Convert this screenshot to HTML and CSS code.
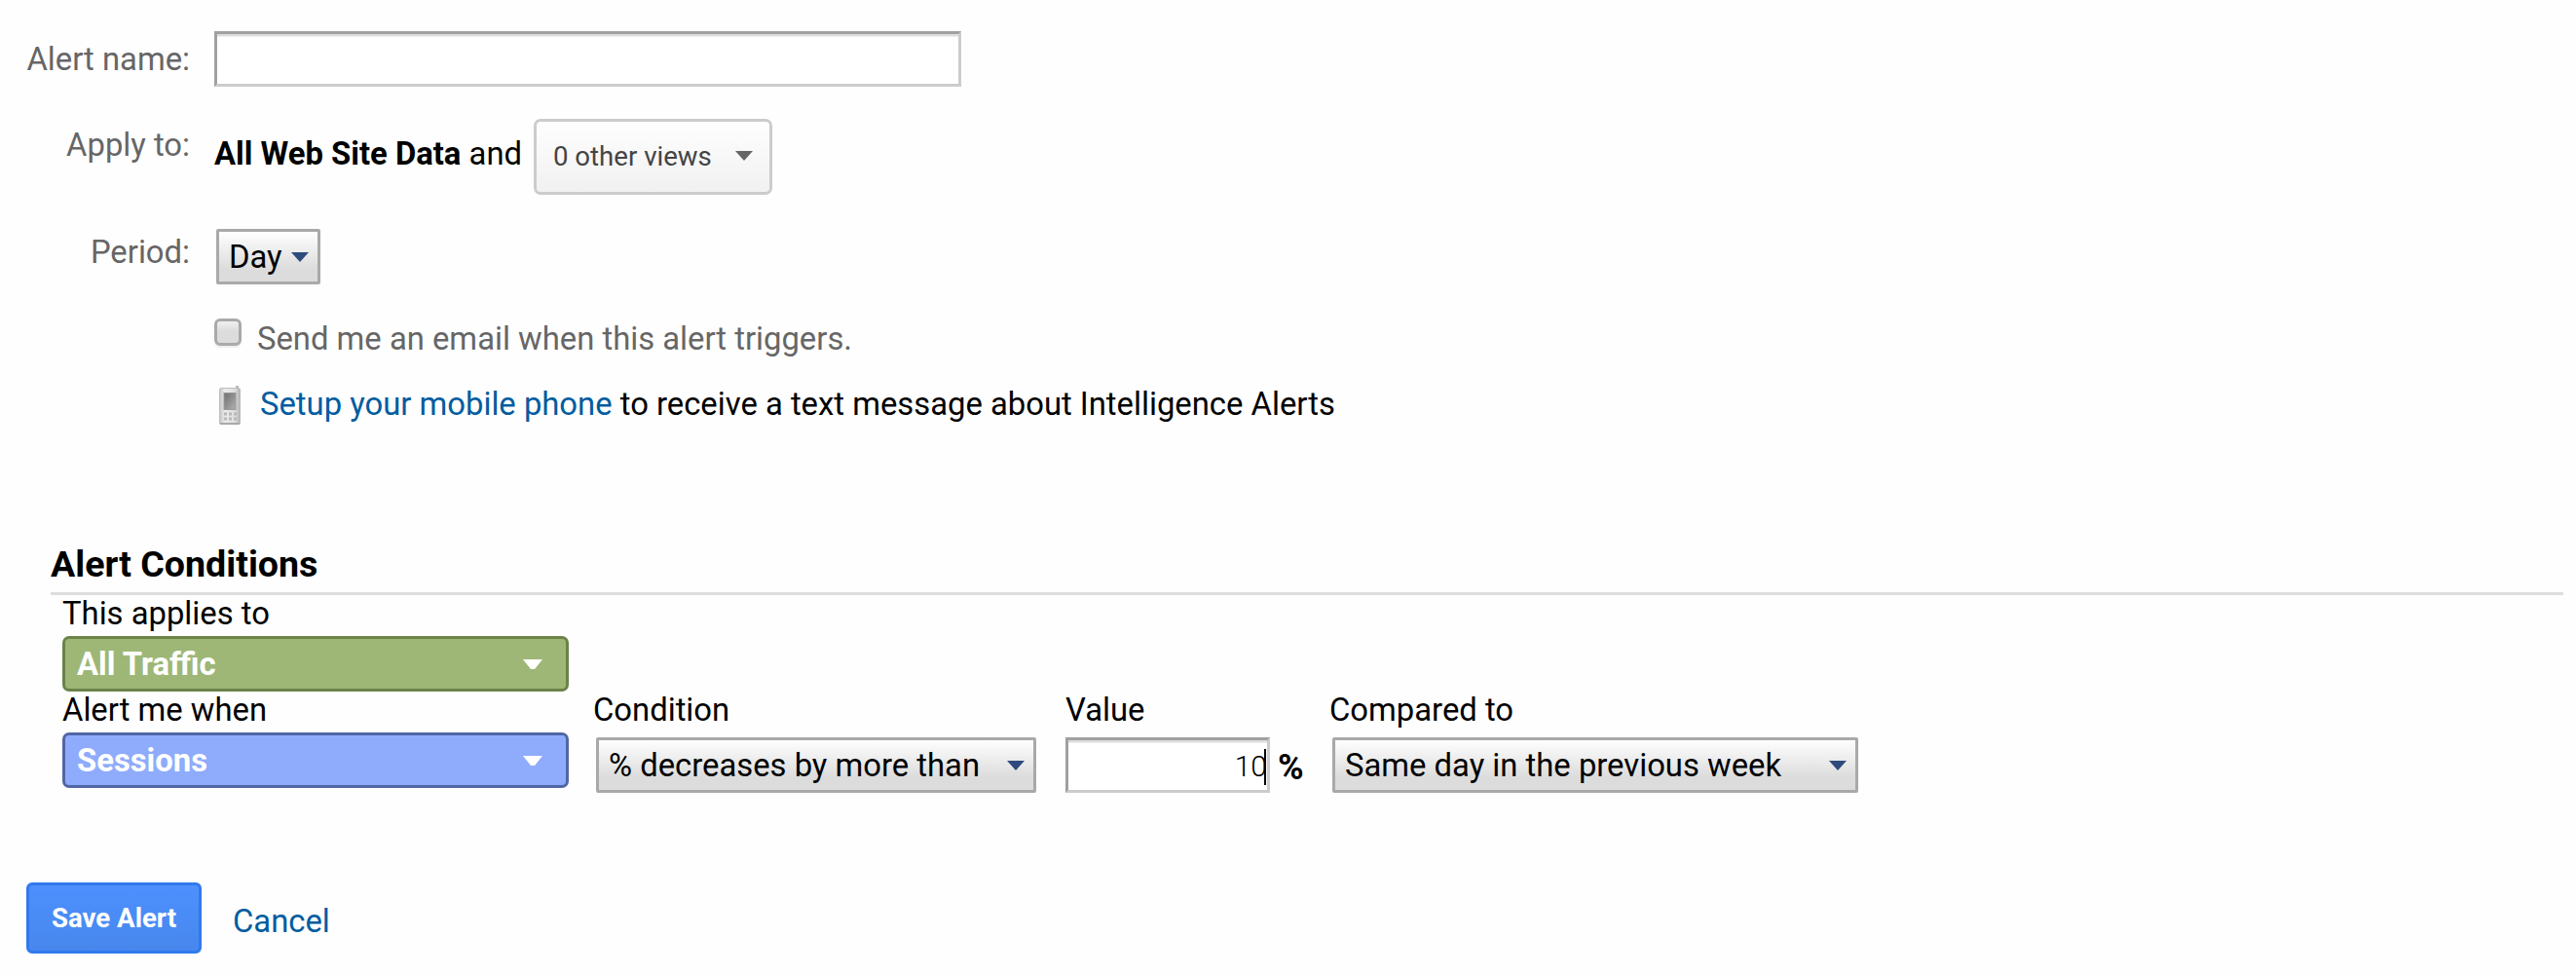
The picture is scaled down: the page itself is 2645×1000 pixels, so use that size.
FILE: index.html
```html
<!DOCTYPE html>
<html lang="en">

<head>
    <meta charset="utf-8">
    <meta name="viewport" content="width=device-width, initial-scale=1.0">
    <title>New alert</title>
    <link rel="stylesheet" href="styles.css">
</head>

<body>

    <form class="alert-form">
        <div class="row">
            <label class="label" for="name">Alert name:</label>
            <input class="text-input name-input" id="name" type="text">
        </div>

        <div class="row row-apply">
            <span class="label">Apply to:</span>
            <span class="profile"><strong>All Web Site Data</strong> and</span>
            <button class="views" type="button">
                <span>0 other views</span>
                <svg class="arrow" viewBox="0 0 18 10"><path d="M0 0h18L9 10z" fill="#666"/></svg>
            </button>
        </div>

        <div class="row row-period">
            <span class="label">Period:</span>
            <button class="select select-day" type="button">
                <span>Day</span>
                <svg class="arrow" viewBox="0 0 18 10"><path d="M0 0h18L9 10z" fill="#2f4a7d"/></svg>
            </button>
        </div>

        <div class="row row-email">
            <span class="checkbox"></span>
            <span class="email-text">Send me an email when this alert triggers.</span>
        </div>

        <div class="row row-phone">
            <svg class="phone" viewBox="0 0 22 40">
                <defs>
                    <linearGradient id="body" x1="0" x2="1" y1="0" y2="0">
                        <stop offset="0" stop-color="#c4c4c4"/>
                        <stop offset=".25" stop-color="#ebebeb"/>
                        <stop offset=".75" stop-color="#dedede"/>
                        <stop offset="1" stop-color="#b0b0b0"/>
                    </linearGradient>
                    <linearGradient id="screen" x1="0" x2="1" y1="0" y2="1">
                        <stop offset="0" stop-color="#707070"/>
                        <stop offset="1" stop-color="#b0b0b0"/>
                    </linearGradient>
                </defs>
                <path d="M17 0h3v5h-3z" fill="#bbb"/>
                <rect x=".5" y="2.5" width="21" height="37" rx="1.5" fill="url(#body)" stroke="#bdbdbd"/>
                <path d="M1 39h20" stroke="#aaa" stroke-width="2"/>
                <rect x="5" y="7.5" width="12" height="17" fill="url(#screen)" stroke="#999"/>
                <path d="M5 29h3m2 0h3m2 0h3M5 34h3m2 0h3m2 0h3" stroke="#b8b8b8" stroke-width="3"/>
            </svg>
            <span class="phone-text"><a href="#">Setup your mobile phone</a> to receive a text message about Intelligence Alerts</span>
        </div>

        <h2>Alert Conditions</h2>

        <div class="conditions">
            <div class="field">
                <span class="field-label">This applies to</span>
                <button class="picker picker-green" type="button">
                    <span>All Traffic</span>
                    <svg class="arrow" viewBox="0 0 20 10"><path d="M0 0h20l-8 10h-4z" fill="#fff"/></svg>
                </button>
            </div>

            <div class="field-row">
                <div class="field">
                    <span class="field-label">Alert me when</span>
                    <button class="picker picker-blue" type="button">
                        <span>Sessions</span>
                        <svg class="arrow" viewBox="0 0 20 10"><path d="M0 0h20l-8 10h-4z" fill="#fff"/></svg>
                    </button>
                </div>
                <div class="field field-condition">
                    <span class="field-label">Condition</span>
                    <button class="select select-condition" type="button">
                        <span>% decreases by more than</span>
                        <svg class="arrow" viewBox="0 0 18 10"><path d="M0 0h18L9 10z" fill="#2f4a7d"/></svg>
                    </button>
                </div>
                <div class="field field-value">
                    <span class="field-label">Value</span>
                    <div class="value">
                        <div class="text-input value-input">10<span class="cursor"></span></div>
                        <strong>%</strong>
                    </div>
                </div>
                <div class="field">
                    <span class="field-label">Compared to</span>
                    <button class="select select-compare" type="button">
                        <span>Same day in the previous week</span>
                        <svg class="arrow" viewBox="0 0 18 10"><path d="M0 0h18L9 10z" fill="#2f4a7d"/></svg>
                    </button>
                </div>
            </div>
        </div>

        <div class="actions">
            <button class="save" type="button">Save Alert</button>
            <a href="#">Cancel</a>
        </div>
    </form>

</body>

</html>
```

FILE: styles.css
```css
* {
    box-sizing: border-box;
}

body {
    margin: 0;
    background-color: #fefefe;
    font-family: Roboto, sans-serif;
    font-size: 32.8px;
    line-height: 38px;
    color: #000;
}

button {
    font-family: inherit;
    font-size: inherit;
    line-height: inherit;
    display: flex;
    justify-content: space-between;
    padding: 0;
}

a {
    color: #015c9f;
    text-decoration: none;
}

.alert-form {
    padding: 32px 13px 0 0;
}

.row {
    display: flex;
    align-items: flex-start;
    height: 57px;
    white-space: nowrap;
}

.label {
    width: 195px;
    margin-right: 25px;
    padding-top: 10px;
    text-align: right;
    color: #666;
}

.text-input {
    height: 57px;
    border: 3px solid;
    border-color: #a0a0a0 #ccc #ccc #a0a0a0;
    background-color: #fff;
    box-shadow: inset 0 2px #ddd, inset 0 3px #eee;
}

.name-input {
    width: 767px;
}

.arrow {
    width: 18px;
    height: 10px;
    flex: none;
}

/* apply to */

.row-apply {
    height: 78px;
    margin-top: 33px;
}

.row-apply .label {
    padding-top: 8px;
}

.profile {
    width: 328px;
    padding-top: 17px;
}

.views {
    width: 245px;
    height: 78px;
    padding: 17px 17px 0 17px;
    border: 3px solid #ccc;
    border-radius: 7px;
    background: linear-gradient(#fefefe, #f1f1f1);
    font-size: 27.6px;
    color: #444;
}

.views .arrow {
    margin-top: 13px;
}

/* grey drop downs */

.select {
    height: 57px;
    padding: 7px 9px 0 10px;
    border: 3px solid #a9a9a9;
    border-radius: 2px;
    background: linear-gradient(#fefefe, #dcdcdc 75%, #dcdcdc);
    color: #000;
}

.select .arrow {
    margin-top: 14px;
}

.row-period {
    margin-top: 35px;
}

.row-period .label {
    padding-top: 5px;
    margin-right: 27px;
}

.select-day {
    width: 107px;
}

.row-email {
    height: 40px;
    margin-top: 35px;
    padding-left: 220px;
}

.checkbox {
    width: 28px;
    height: 28px;
    margin-right: 16px;
    border: 3px solid #aaa;
    border-radius: 6px;
    background: linear-gradient(#f0f0f0, #dcdcdc 45%);
    box-shadow: 0 2px #eee;
}

.email-text {
    padding-top: 2px;
    color: #666;
}

.row-phone {
    height: 41px;
    margin-top: 28px;
    padding-left: 225px;
}

.phone {
    width: 22px;
    height: 40px;
    margin: 1px 20px 0 0;
}

.phone-text {
    padding-top: 1px;
}

/* conditions */

h2 {
    height: 54px;
    margin: 121px 0 0 52px;
    border-bottom: 3px solid #ddd;
    font-size: 37.6px;
    line-height: 44px;
}

.conditions {
    padding-left: 64px;
}

.field-row {
    display: flex;
    white-space: nowrap;
}

.field-label {
    display: block;
}

.picker {
    width: 520px;
    height: 57px;
    margin-top: 4px;
    padding: 7px 24px 0 12px;
    border: 3px solid;
    border-radius: 7px;
    font-weight: bold;
    color: #fff;
}

.picker .arrow {
    width: 20px;
    margin-top: 14px;
}

.picker-green {
    border-color: #6b8249;
    background-color: #9eb777;
}

.picker-blue {
    border-color: #5166a4;
    background-color: #8fabfc;
}

.field-condition {
    width: 510px;
    padding-left: 25px;
}

.field .select {
    margin: 9px 0 0 3px;
}

.select-condition {
    width: 452px;
}

.select-compare {
    width: 540px;
}

.field-value {
    width: 271px;
}

.value {
    display: flex;
    margin-top: 9px;
}

.value-input {
    display: flex;
    justify-content: flex-end;
    width: 210px;
    padding: 8px 1px 0 0;
    font-size: 30px;
    font-weight: 300;
}

.cursor {
    width: 2px;
    height: 37px;
    margin: 1px 0 0 -3px;
    background-color: #000;
}

.value strong {
    margin: 12px 0 0 8px;
    font-size: 36px;
}

/* buttons */

.actions {
    display: flex;
    margin: 92px 0 0 27px;
}

.save {
    width: 180px;
    height: 73px;
    margin-right: 32px;
    padding-top: 15px;
    justify-content: center;
    border: 3px solid #3079ed;
    border-radius: 6px;
    background: linear-gradient(#4d90fe, #4787ed);
    font-size: 27.6px;
    font-weight: bold;
    color: #fff;
}

.actions a {
    padding-top: 21px;
}
```
